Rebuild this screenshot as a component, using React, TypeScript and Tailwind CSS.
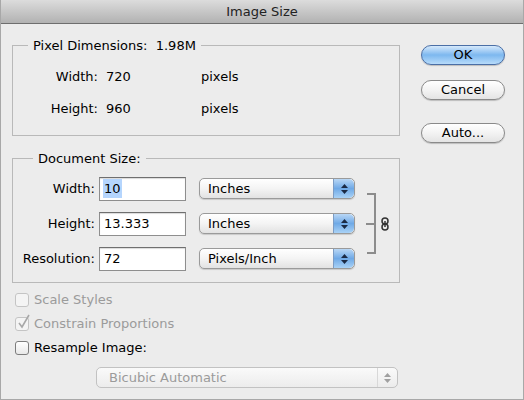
import React from 'react';

const font = { fontFamily: '"DejaVu Sans", "Liberation Sans", sans-serif' };

// little blue up/down stepper on the right of a popup menu
const Stepper = ({ disabled }: { disabled?: boolean }) => (
  <div
    className={
      disabled
        ? 'w-[20px] h-full flex flex-col items-center justify-center gap-[2px] border-l border-[#d8d8d8]'
        : 'w-[21px] h-full flex flex-col items-center justify-center gap-[2px] rounded-r-[5px] bg-gradient-to-b from-[#b9d7f5] via-[#6fa9e6] to-[#a9d2f6] border-l border-[#7c9cc4]'
    }
  >
    <svg width="7" height="4" viewBox="0 0 7 4">
      <path d="M3.5 0 L7 4 L0 4 Z" fill={disabled ? '#a0a0a0' : '#1b2a44'} />
    </svg>
    <svg width="7" height="4" viewBox="0 0 7 4">
      <path d="M0 0 L7 0 L3.5 4 Z" fill={disabled ? '#a0a0a0' : '#1b2a44'} />
    </svg>
  </div>
);

const Popup = ({ label }: { label: string }) => (
  <div className="w-[156px] h-[21px] flex items-center rounded-[5px] border border-[#9a9a9a] bg-gradient-to-b from-white via-[#f4f4f4] to-[#e2e2e2] shadow-[0_1px_1px_rgba(0,0,0,0.15)] overflow-hidden">
    <span className="flex-1 pl-[8px] text-[13px] text-[#000]">{label}</span>
    <Stepper />
  </div>
);

const Field = ({ label, value, unit, selected }: { label: string; value: string; unit: string; selected?: boolean }) => (
  <div className="flex items-center h-[24px]">
    <span className="w-[96px] text-right pr-[3px] text-[13px] text-[#000]">{label}</span>
    <div className="ml-[1px] w-[87px] h-[24px] border border-[#8e8e8e] border-t-[#6f6f6f] bg-white flex items-center pl-[3px] text-[13px] text-[#000] shadow-[inset_0_1px_1px_rgba(0,0,0,0.15)]">
      <span className={selected ? 'bg-[#b5d5fd] px-[1px]' : 'px-[1px]'}>{value}</span>
    </div>
    <div className="ml-[13px]">
      <Popup label={unit} />
    </div>
  </div>
);

const Pill = ({ children, primary }: { children: React.ReactNode; primary?: boolean }) => (
  <div
    className={
      primary
        ? 'w-[84px] h-[20px] rounded-full border border-[#4b6fa6] bg-gradient-to-b from-[#d6e9fb] via-[#7db8ef] to-[#b7dbfa] flex items-center justify-center text-[13px] text-[#000] shadow-[0_1px_1px_rgba(0,0,0,0.2)]'
        : 'w-[84px] h-[20px] rounded-full border border-[#8a8a8a] bg-gradient-to-b from-white via-[#f3f3f3] to-[#e4e4e4] flex items-center justify-center text-[13px] text-[#000] shadow-[0_1px_1px_rgba(0,0,0,0.2)]'
    }
  >
    {children}
  </div>
);

const Check = ({ label, checked, disabled }: { label: string; checked?: boolean; disabled?: boolean }) => (
  <div className="flex items-center h-[24px]">
    <div
      className={
        disabled
          ? 'relative w-[14px] h-[14px] rounded-[3px] border border-[#c4c4c4] bg-[#f4f4f4]'
          : 'relative w-[14px] h-[14px] rounded-[3px] border border-[#7d7d7d] bg-gradient-to-b from-white to-[#e8e8e8]'
      }
    >
      {checked && (
        <svg className="absolute left-[1px] top-[-4px]" width="14" height="16" viewBox="0 0 14 16">
          <path d="M2 9 L5 13 L12 1" stroke="#a8a8a8" strokeWidth="1.6" fill="none" />
        </svg>
      )}
    </div>
    <span className={disabled ? 'ml-[5px] text-[13px] text-[#9b9b9b]' : 'ml-[5px] text-[13px] text-[#000]'}>{label}</span>
  </div>
);

const App: React.FC = () => {
  return (
    <div style={font} className="w-[524px] h-[400px] bg-[#ececec] flex flex-col border-x border-b border-[#a8a8a8] overflow-hidden">
      {/* title bar */}
      <div className="h-[24px] shrink-0 flex items-center justify-center bg-gradient-to-b from-[#dcdcdc] to-[#b2b2b2] border-b border-[#6e6e6e] text-[13px] text-[#222]">
        Image Size
      </div>

      <div className="flex pl-[11px] pt-[12px]">
        {/* left side */}
        <div className="w-[388px] flex flex-col">
          <fieldset className="h-[100px] border border-[#b9b9b9] px-0">
            <legend className="ml-[15px] px-[5px] text-[13px] text-[#000]">Pixel Dimensions:&nbsp;&nbsp;1.98M</legend>
            <div className="flex flex-col gap-[8px] pt-[9px]">
              <div className="flex items-center h-[24px] text-[13px] text-[#000]">
                <span className="w-[85px] text-right">Width:</span>
                <span className="ml-[8px] w-[95px]">720</span>
                <span>pixels</span>
              </div>
              <div className="flex items-center h-[24px] text-[13px] text-[#000]">
                <span className="w-[85px] text-right">Height:</span>
                <span className="ml-[8px] w-[95px]">960</span>
                <span>pixels</span>
              </div>
            </div>
          </fieldset>

          <fieldset className="mt-[13px] h-[134px] border border-[#b9b9b9] px-0">
            <legend className="ml-[20px] px-[5px] text-[13px] text-[#000]">Document Size:</legend>
            <div className="flex items-center pt-[8px]">
              <div className="flex flex-col gap-[11px] -ml-[11px]">
                <Field label="Width:" value="10" unit="Inches" selected />
                <Field label="Height:" value="13.333" unit="Inches" />
                <Field label="Resolution:" value="72" unit="Pixels/Inch" />
              </div>
              {/* constrain link bracket */}
              <div className="ml-[12px] flex items-center">
                <div className="relative w-[9px] h-[61px] border-y-2 border-r-2 border-[#8c8c8c]">
                  <div className="absolute right-0 top-[28px] w-[8px] h-[2px] bg-[#8c8c8c]" />
                </div>
                <svg className="ml-[5px]" width="8" height="14" viewBox="0 0 8 14">
                  <rect x="1" y="1" width="6" height="6" rx="3" stroke="#333" strokeWidth="1.5" fill="none" />
                  <rect x="1" y="7" width="6" height="6" rx="3" stroke="#333" strokeWidth="1.5" fill="none" />
                  <line x1="4" y1="4" x2="4" y2="10" stroke="#333" strokeWidth="1.5" />
                </svg>
              </div>
            </div>
          </fieldset>

          <div className="flex flex-col pt-[5px] pl-[3px]">
            <Check label="Scale Styles" disabled />
            <Check label="Constrain Proportions" checked disabled />
            <Check label="Resample Image:" />
          </div>
          <div className="ml-[84px] mt-[7px] w-[302px] h-[21px] flex items-center rounded-[5px] border border-[#c2c2c2] bg-gradient-to-b from-[#fafafa] to-[#ececec] overflow-hidden">
            <span className="flex-1 pl-[12px] text-[13px] text-[#9b9b9b]">Bicubic Automatic</span>
            <Stepper disabled />
          </div>
        </div>

        {/* right side buttons */}
        <div className="ml-[21px] flex flex-col pt-[9px]">
          <Pill primary>OK</Pill>
          <div className="mt-[15px]">
            <Pill>Cancel</Pill>
          </div>
          <div className="mt-[23px]">
            <Pill>Auto...</Pill>
          </div>
        </div>
      </div>
    </div>
  );
};

export default App;
